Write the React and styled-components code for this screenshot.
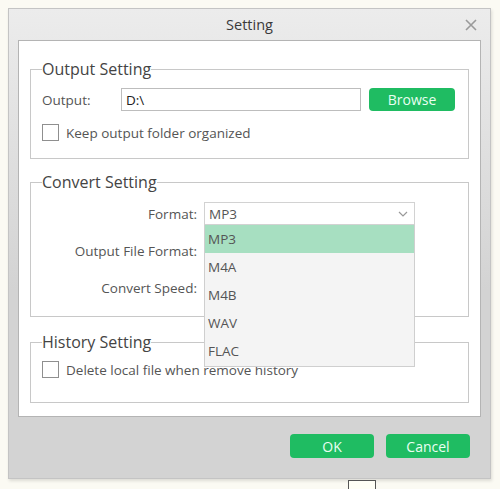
import React from 'react';
import styled, { createGlobalStyle } from 'styled-components';

// 설정 창 (Setting dialog)
const Global = createGlobalStyle`
  body {
    margin: 0;
    background: #fbfaf3;
    font-family: "Open Sans", "Noto Sans", sans-serif;
  }
`;

const Page = styled.div`
  width: 500px;
  height: 489px;
  padding: 8px 0 0 8px;
  box-sizing: border-box;
  overflow: hidden;
`;

const Window = styled.div`
  width: 483px;
  height: 471px;
  box-sizing: border-box;
  border: 1px solid #c4c4c4;
  background: linear-gradient(#ececec, #d3d3d3 60%);
  box-shadow: 1px 2px 3px rgba(0, 0, 0, 0.12);
  display: flex;
  flex-direction: column;
`;

const TitleBar = styled.div`
  height: 31px;
  position: relative;
  display: flex;
  align-items: center;
  justify-content: center;
  font-size: 14.5px;
  color: #3a3a3a;
`;

const Close = styled.span`
  position: absolute;
  right: 12px;
  top: 8px;
  width: 14px;
  height: 14px;
`;

const Panel = styled.div`
  margin: 0 9px;
  background: #fff;
  border: 1px solid #b4b4b4;
  height: 377px;
  box-sizing: border-box;
  padding: 18px 11px 0;
  position: relative;
`;

const Group = styled.fieldset`
  margin: ${p => p.$top || 0}px 0 0;
  padding: ${p => p.$pad || '9px 11px 17px'};
  border: 1px solid #c8c8c8;
  min-width: 0;
`;

const Legend = styled.legend`
  padding: 0;
  margin-left: 0;
  font-size: 16px;
  line-height: 20px;
  color: #444;
`;

const Row = styled.div`
  display: flex;
  align-items: center;
  height: 23px;
  margin-top: ${p => p.$gap || 0}px;
`;

const Label = styled.span`
  font-size: 13.5px;
  color: #555;
  width: ${p => p.$w}px;
  text-align: ${p => p.$right ? 'right' : 'left'};
  padding-right: ${p => p.$right ? 7 : 0}px;
  flex: none;
  box-sizing: border-box;
`;

const TextBox = styled.div`
  width: 240px;
  height: 23px;
  box-sizing: border-box;
  border: 1px solid #bdbdbd;
  font-size: 13.5px;
  color: #222;
  padding-left: 4px;
  display: flex;
  align-items: center;
`;

const GreenButton = styled.button`
  width: ${p => p.$w}px;
  height: ${p => p.$h || 23}px;
  margin-left: ${p => p.$ml || 0}px;
  border: none;
  border-radius: 4px;
  background: #1fbc62;
  color: #eafff2;
  font-family: inherit;
  font-size: 14px;
  padding: 0;
`;

const Check = styled.span`
  width: 17px;
  height: 17px;
  box-sizing: border-box;
  border: 1px solid #8f8f8f;
  background: #fff;
  flex: none;
  margin-right: 7px;
`;

const CheckText = styled.span`
  font-size: 13.5px;
  color: #555;
`;

const Select = styled.div`
  width: 211px;
  height: 23px;
  box-sizing: border-box;
  border: 1px solid #d2d2d2;
  font-size: 13.5px;
  color: #555;
  padding: 0 6px 0 4px;
  display: flex;
  align-items: center;
  justify-content: space-between;
`;

const Drop = styled.div`
  position: absolute;
  left: 185px;
  top: 184px;
  width: 211px;
  box-sizing: border-box;
  background: #f4f4f4;
  border: 1px solid #cfcfcf;
  border-top: none;
  padding-bottom: 1px;
`;

const Item = styled.div`
  height: 28px;
  display: flex;
  align-items: center;
  padding-left: 3px;
  font-size: 13.5px;
  color: #555;
  background: ${p => p.$active ? '#a7dfc1' : 'transparent'};
`;

const Footer = styled.div`
  display: flex;
  justify-content: flex-end;
  padding: 17px 20px 0 0;
`;

const Tip = styled.div`
  width: 28px;
  height: 10px;
  margin: 1px 0 0 340px;
  box-sizing: border-box;
  border: 1px solid #555;
  border-bottom: none;
  background: #fffff6;
`;

const formats = ['MP3', 'M4A', 'M4B', 'WAV', 'FLAC'];

export default function App() {
  return (
    <Page>
      <Global />
      <Window>
        <TitleBar>
          Setting
          <Close>
            <svg width="14" height="14" viewBox="0 0 14 14">
              <path d="M2 2L12 12M12 2L2 12" stroke="#9a9a9a" strokeWidth="1.6" />
            </svg>
          </Close>
        </TitleBar>
        <Panel>
          <Group>
            <Legend>Output Setting</Legend>
            <Row>
              <Label $w={79}>Output:</Label>
              <TextBox>D:\</TextBox>
              <GreenButton $w={86} $ml={8}>Browse</GreenButton>
            </Row>
            <Row $gap={13} style={{ height: 17 }}>
              <Check />
              <CheckText>Keep output folder organized</CheckText>
            </Row>
          </Group>

          <Group $top={13} $pad="10px 11px 17px 0">
            <Legend style={{ marginLeft: 11 }}>Convert Setting</Legend>
            <Row>
              <Label $w={173} $right>Format:</Label>
              <Select>
                MP3
                <svg width="10" height="6" viewBox="0 0 10 6">
                  <path d="M1 1L5 5L9 1" fill="none" stroke="#999" strokeWidth="1.2" />
                </svg>
              </Select>
            </Row>
            <Row $gap={14}>
              <Label $w={173} $right>Output File Format:</Label>
            </Row>
            <Row $gap={14}>
              <Label $w={173} $right>Convert Speed:</Label>
            </Row>
          </Group>

          <Group $top={15} $pad="9px 11px 24px">
            <Legend>History Setting</Legend>
            <Row style={{ height: 17 }}>
              <Check />
              <CheckText>Delete local file when remove history</CheckText>
            </Row>
          </Group>

          <Drop>
            {formats.map((f, i) => (
              <Item key={f} $active={i === 0}>{f}</Item>
            ))}
          </Drop>
        </Panel>
        <Footer>
          <GreenButton $w={84} $h={24}>OK</GreenButton>
          <GreenButton $w={84} $h={24} $ml={12}>Cancel</GreenButton>
        </Footer>
      </Window>
      <Tip />
    </Page>
  );
}
